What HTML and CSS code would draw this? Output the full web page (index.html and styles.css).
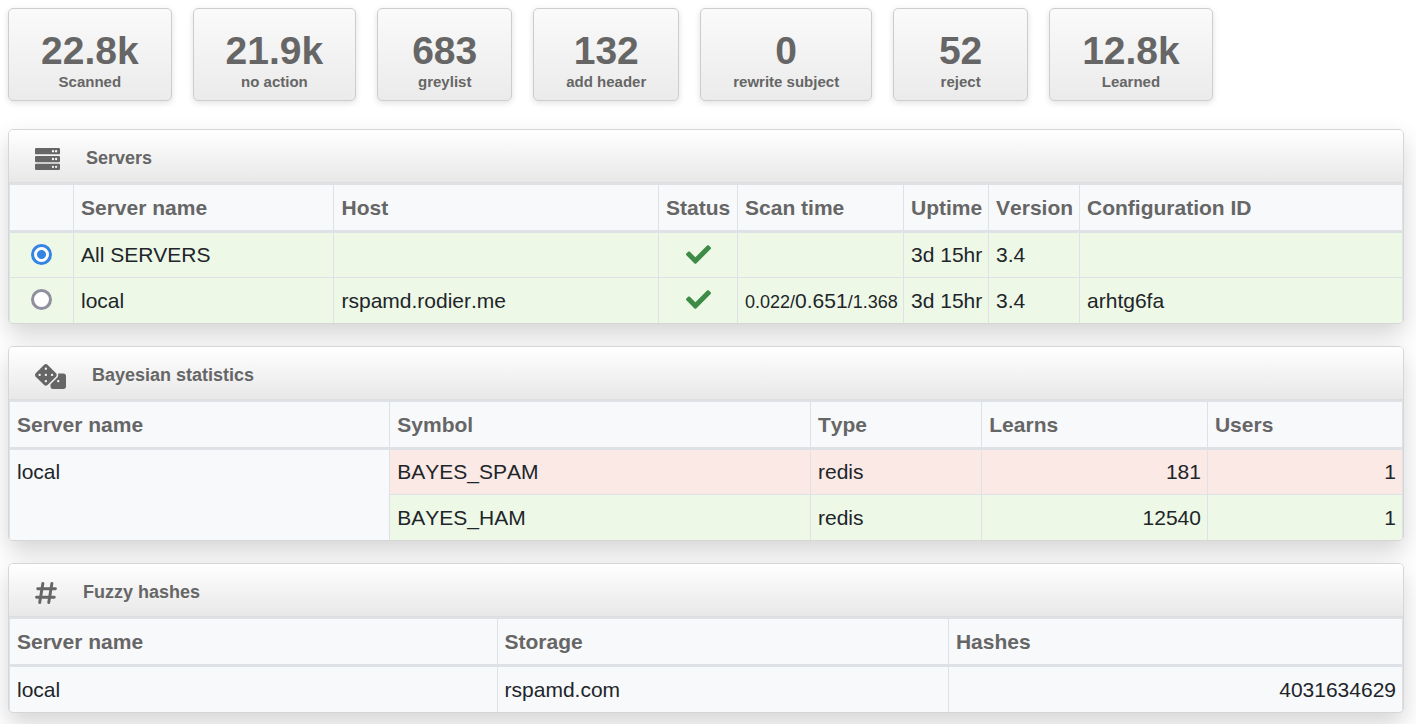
FILE: index.html
```html
<!DOCTYPE html>
<html lang="en">
<head>
<meta charset="utf-8">
<title>Rspamd status</title>
<link rel="stylesheet" href="styles.css">
</head>
<body>
<main>
<ul class="stats">
<li class="stat"><strong>22.8k</strong><span>Scanned</span></li>
<li class="stat"><strong>21.9k</strong><span>no action</span></li>
<li class="stat"><strong>683</strong><span>greylist</span></li>
<li class="stat"><strong>132</strong><span>add header</span></li>
<li class="stat"><strong>0</strong><span>rewrite subject</span></li>
<li class="stat"><strong>52</strong><span>reject</span></li>
<li class="stat"><strong>12.8k</strong><span>Learned</span></li>
</ul>

<section class="panel">
<header class="panel-head">
<svg class="icon icon-server" viewBox="0 0 512 448" aria-hidden="true"><path fill-rule="evenodd" d="M24 0h464a24 24 0 0 1 24 24v80a24 24 0 0 1-24 24H24a24 24 0 0 1-24-24V24A24 24 0 0 1 24 0zm0 160h464a24 24 0 0 1 24 24v80a24 24 0 0 1-24 24H24a24 24 0 0 1-24-24v-80a24 24 0 0 1 24-24zm0 160h464a24 24 0 0 1 24 24v80a24 24 0 0 1-24 24H24a24 24 0 0 1-24-24v-80a24 24 0 0 1 24-24zM368 40a24 24 0 1 0 0 48a24 24 0 1 0 0-48zm64 0a24 24 0 1 0 0 48a24 24 0 1 0 0-48zM368 200a24 24 0 1 0 0 48a24 24 0 1 0 0-48zm64 0a24 24 0 1 0 0 48a24 24 0 1 0 0-48zM368 360a24 24 0 1 0 0 48a24 24 0 1 0 0-48zm64 0a24 24 0 1 0 0 48a24 24 0 1 0 0-48z"/></svg>
<h2>Servers</h2>
</header>
<table class="servers">
<colgroup><col class="c-radio"><col class="c-name"><col class="c-host"><col class="c-status"><col class="c-scan"><col class="c-uptime"><col class="c-version"><col></colgroup>
<thead><tr><th></th><th>Server name</th><th>Host</th><th>Status</th><th>Scan time</th><th>Uptime</th><th>Version</th><th>Configuration ID</th></tr></thead>
<tbody>
<tr class="ok"><td class="mid"><input type="radio" name="server" id="srv-all" checked></td><td><label for="srv-all">All SERVERS</label></td><td></td><td class="mid"><svg class="check" viewBox="0 65 512 382" role="img" aria-label="up"><path d="M173.898 439.404l-166.4-166.4c-9.997-9.997-9.997-26.206 0-36.204l36.203-36.204c9.997-9.998 26.207-9.998 36.204 0L192 312.69 432.095 72.596c9.997-9.997 26.207-9.997 36.204 0l36.203 36.204c9.997 9.997 9.997 26.206 0 36.204l-294.4 294.401c-9.998 9.997-26.207 9.997-36.204-.001z"/></svg></td><td></td><td>3d 15hr</td><td>3.4</td><td></td></tr>
<tr class="ok"><td class="mid"><input type="radio" name="server" id="srv-local"></td><td><label for="srv-local">local</label></td><td>rspamd.rodier.me</td><td class="mid"><svg class="check" viewBox="0 65 512 382" role="img" aria-label="up"><path d="M173.898 439.404l-166.4-166.4c-9.997-9.997-9.997-26.206 0-36.204l36.203-36.204c9.997-9.998 26.207-9.998 36.204 0L192 312.69 432.095 72.596c9.997-9.997 26.207-9.997 36.204 0l36.203 36.204c9.997 9.997 9.997 26.206 0 36.204l-294.4 294.401c-9.998 9.997-26.207 9.997-36.204-.001z"/></svg></td><td><small>0.022/</small>0.651<small>/1.368</small></td><td>3d 15hr</td><td>3.4</td><td>arhtg6fa</td></tr>
</tbody>
</table>
</section>

<section class="panel">
<header class="panel-head">
<svg class="icon icon-dice" viewBox="0 0 640 512" aria-hidden="true"><path d="M592 192H473.26c12.69 29.59 7.12 65.2-17 89.32L320 417.58V464c0 26.51 21.49 48 48 48h224c26.51 0 48-21.49 48-48V240c0-26.51-21.49-48-48-48zM480 376c-13.25 0-24-10.75-24-24 0-13.26 10.75-24 24-24s24 10.74 24 24c0 13.25-10.75 24-24 24zm-46.37-186.7L258.7 14.37c-19.16-19.16-50.23-19.16-69.39 0L14.37 189.3c-19.16 19.16-19.16 50.23 0 69.39L189.3 433.63c19.16 19.16 50.23 19.16 69.39 0L433.63 258.7c19.16-19.17 19.16-50.24 0-69.4zM96 248c-13.25 0-24-10.75-24-24 0-13.26 10.75-24 24-24s24 10.74 24 24c0 13.25-10.75 24-24 24zm128 128c-13.25 0-24-10.75-24-24 0-13.26 10.75-24 24-24s24 10.74 24 24c0 13.25-10.75 24-24 24zm0-128c-13.25 0-24-10.75-24-24 0-13.26 10.75-24 24-24s24 10.74 24 24c0 13.25-10.75 24-24 24zm0-128c-13.25 0-24-10.75-24-24 0-13.26 10.75-24 24-24s24 10.74 24 24c0 13.25-10.75 24-24 24zm128 128c-13.25 0-24-10.75-24-24 0-13.26 10.75-24 24-24s24 10.74 24 24c0 13.25-10.75 24-24 24z"/></svg>
<h2>Bayesian statistics</h2>
</header>
<table class="bayes">
<colgroup><col class="c-server"><col class="c-symbol"><col class="c-type"><col class="c-learns"><col></colgroup>
<thead><tr><th>Server name</th><th>Symbol</th><th>Type</th><th>Learns</th><th>Users</th></tr></thead>
<tbody>
<tr class="spam"><td class="server" rowspan="2">local</td><td>BAYES_SPAM</td><td>redis</td><td class="num">181</td><td class="num">1</td></tr>
<tr class="ok"><td>BAYES_HAM</td><td>redis</td><td class="num">12540</td><td class="num">1</td></tr>
</tbody>
</table>
</section>

<section class="panel">
<header class="panel-head">
<svg class="icon icon-hash" viewBox="0 0 448 448" aria-hidden="true"><path class="hash-line" d="M160 32L96 416M344 32l-64 384M56 136h360M32 312h360"/></svg>
<h2>Fuzzy hashes</h2>
</header>
<table class="fuzzy">
<colgroup><col class="c-owner"><col class="c-storage"><col></colgroup>
<thead><tr><th>Server name</th><th>Storage</th><th>Hashes</th></tr></thead>
<tbody><tr><td>local</td><td>rspamd.com</td><td class="num">4031634629</td></tr></tbody>
</table>
</section>
</main>
</body>
</html>
```
FILE: styles.css
```css
* { box-sizing: border-box; }
body {
  margin: 0;
  background: #fff;
  color: #212529;
  font: 21px/31px "Liberation Sans", Arial, sans-serif;
  font-kerning: none;
}
main { padding: 8px 12px 12px 8px; }
.stats {
  display: flex;
  flex-wrap: wrap;
  gap: 21px;
  margin: 0 0 28px;
  padding: 0;
  list-style: none;
}
.stat {
  display: flex;
  flex-direction: column;
  align-items: center;
  min-width: 135px;
  padding: 20px 32px 8px;
  border: 1px solid #cdcdcd;
  border-radius: 5px;
  background: linear-gradient(#fafafa, #ebebeb);
  box-shadow: 0 2px 6px rgba(0, 0, 0, 0.12);
  color: #666;
  font-size: 15px;
  line-height: 20px;
  font-weight: bold;
}
.stat strong { font-size: 39px; line-height: 43px; }
.panel {
  margin-bottom: 22px;
  border: 1px solid #d6d6d6;
  border-radius: 5px;
  overflow: hidden;
  background: #f8f9fb;
  box-shadow: 0 11px 24px rgba(0, 0, 0, 0.17);
}
.panel-head {
  display: flex;
  align-items: center;
  gap: 26px;
  height: 53px;
  padding: 4px 26px 0;
  border-bottom: 1px solid #dedede;
  background: linear-gradient(#fff, #e8e8e8);
  color: #666;
}
.panel-head h2 { margin: 0; font-size: 18px; line-height: 26px; }
.icon { display: block; margin-top: 2px; fill: currentColor; }
.icon-server { width: 25px; height: 22px; }
.icon-dice { width: 31px; height: 25px; }
.icon-hash { width: 22px; height: 22px; }
.hash-line { fill: none; stroke: currentColor; stroke-width: 60; stroke-linecap: round; }
table {
  width: 100%;
  table-layout: fixed;
  border-collapse: collapse;
  border: 1px solid #dee2e6;
  border-bottom: 0;
}
th, td {
  padding: 7px 6px 7px 7px;
  border: 1px solid #dee2e6;
  text-align: left;
  vertical-align: top;
  white-space: nowrap;
}
th { color: #666; }
thead th { border-top-width: 2px; border-bottom: 3px solid #dee2e6; }
tbody td { padding-top: 6px; }
tbody tr:last-child td { padding-top: 7px; }
tbody tr:last-child td, td[rowspan] { border-bottom: 0; }
.ok { background: #edf8e7; }
.spam { background: #fbe9e6; }
.server { background: #f8f9fb; }
td.num { text-align: right; }
td.mid { padding: 7px 7px 9px; text-align: center; vertical-align: middle; line-height: 0; }
small { font-size: 18px; line-height: 0; }
.c-radio { width: 64px; }
.c-name { width: 18.7%; }
.c-host { width: 23.3%; }
.c-status { width: 79px; }
.c-scan { width: 166px; }
.c-uptime { width: 85px; }
.c-version { width: 91px; }
.c-server { width: 27.3%; }
.c-symbol { width: 30.2%; }
.c-type { width: 12.3%; }
.c-learns { width: 16.2%; }
.c-owner { width: 35%; }
.c-storage { width: 32.4%; }
.check { width: 25px; height: 19px; fill: #3e8b47; }
input[type="radio"] {
  appearance: none;
  width: 21px;
  height: 21px;
  margin: 0;
  border: 3px solid #8f8f9d;
  border-radius: 50%;
  background: #fff;
}
input[type="radio"]:checked {
  border-color: #3584e4;
  background: radial-gradient(circle, #3584e4 4px, #fff 5px);
}
```
